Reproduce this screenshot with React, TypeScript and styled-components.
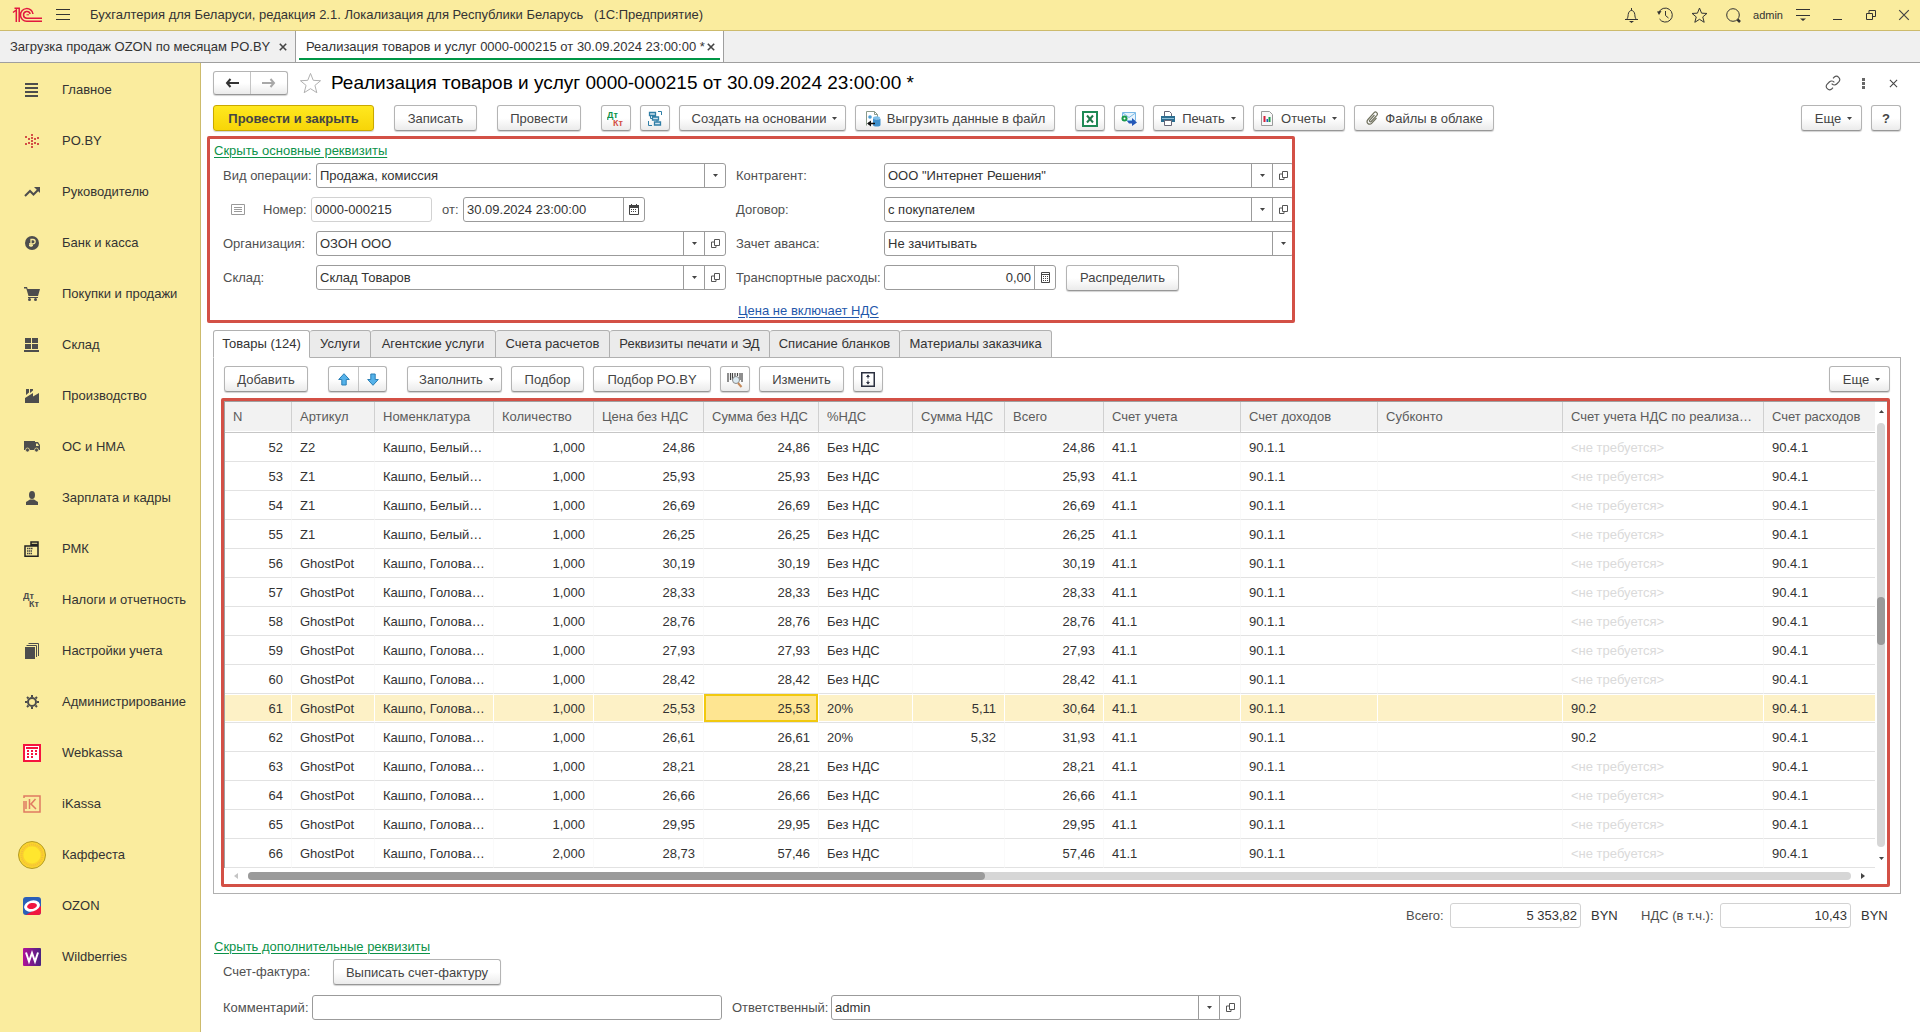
import React from 'react';
import styled, { createGlobalStyle, css } from 'styled-components';

const Global = createGlobalStyle`
  *, *::before, *::after { box-sizing: border-box; }
  body { margin: 0; background: #fff; }
  body, button, input, select, table {
    font-family: "Liberation Sans", Arial, sans-serif;
    font-size: 13px;
    line-height: 18px;
    color: #333;
  }
`;

const RED = '#d35046';

/* ---------- shell ---------- */

const Shell = styled.div`
  display: flex;
  flex-direction: column;
  min-height: 100vh;
`;

const TitleBar = styled.header`
  display: flex;
  align-items: center;
  height: 31px;
  background: #faec9e;
  border-bottom: 1px solid #cdbb6c;
`;

const AppName = styled.span`
  flex: 1;
  padding-left: 8px;
  white-space: pre;
`;

const BarButton = styled.button<{ $w?: number }>`
  display: flex;
  align-items: center;
  justify-content: center;
  width: ${(p) => p.$w ?? 34}px;
  height: 30px;
  padding: 0;
  border: 0;
  background: none;
`;

const UserName = styled.span`
  width: 36px;
  text-align: center;
  font-size: 11px;
`;

const LogoBox = styled.div`
  display: flex;
  padding-left: 12px;
`;

const WindowTabs = styled.nav`
  display: flex;
  height: 32px;
  background: #f0f0f0;
  border-bottom: 1px solid #9f9f9f;
`;

const WindowTab = styled.div<{ $w: number; $active?: boolean }>`
  display: flex;
  align-items: center;
  justify-content: space-between;
  width: ${(p) => p.$w}px;
  padding: 0 6px 0 10px;
  border-right: 1px solid #9f9f9f;
  white-space: nowrap;
  ${(p) =>
    p.$active &&
    css`
      background: linear-gradient(#009646, #009646) 50% calc(100% - 2px) / calc(100% - 6px) 2px no-repeat #fff;
    `}
`;

const TabLabel = styled.button`
  padding: 0;
  border: 0;
  background: none;
`;

const TabClose = styled.button`
  display: flex;
  padding: 2px;
  border: 0;
  background: none;
`;

const Body = styled.div`
  display: flex;
  flex: 1;
`;

const Sidebar = styled.nav`
  flex: none;
  width: 201px;
  padding-top: 1px;
  background: #faec9e;
  border-right: 1px solid #cdbb6c;
`;

const SideItem = styled.a`
  display: flex;
  align-items: center;
  gap: 14px;
  height: 51px;
  padding-left: 16px;
  color: #333;
  text-decoration: none;
  white-space: nowrap;
`;

const SideIcon = styled.span`
  display: flex;
  justify-content: center;
  width: 32px;
`;

const Main = styled.main`
  flex: 1;
  min-width: 0;
  padding: 8px 19px 12px 12px;
`;

/* ---------- controls ---------- */

const buttonFace = css`
  border: 1px solid #b4b4b4;
  border-bottom-color: #979797;
  background: linear-gradient(#fff 50%, #ebebeb);
  box-shadow: 0 1px 1px rgba(0, 0, 0, 0.18);
`;

const Button = styled.button<{ $w?: number; $primary?: boolean; $menu?: boolean }>`
  display: flex;
  flex: none;
  align-items: center;
  justify-content: center;
  gap: 6px;
  width: ${(p) => (p.$w ? `${p.$w}px` : 'auto')};
  height: 26px;
  padding: 1px 0 0 ${(p) => (p.$menu ? 4 : 0)}px;
  border-radius: 3px;
  color: #444;
  white-space: nowrap;
  ${buttonFace}
  ${(p) =>
    p.$primary &&
    css`
      border-color: #c9a800;
      background: linear-gradient(#ffe81f, #f7d508);
      font-weight: bold;
    `}
`;

const ButtonPair = styled.div`
  display: flex;
  border-radius: 3px;
  ${buttonFace}
`;

const PairButton = styled.button<{ $w: number; $h: number }>`
  display: flex;
  align-items: center;
  justify-content: center;
  width: ${(p) => p.$w}px;
  height: ${(p) => p.$h}px;
  padding: 0;
  border: 0;
  background: none;
  & + & { border-left: 1px solid #c4c4c4; }
`;

const Bar = styled.div<{ $gap?: number }>`
  display: flex;
  align-items: center;
  gap: ${(p) => p.$gap ?? 20}px;
`;

const Spacer = styled.span`
  flex: 1;
`;

const Frame = styled.span<{ $w?: number; $muted?: boolean }>`
  display: flex;
  flex: ${(p) => (p.$w ? 'none' : '1')};
  width: ${(p) => (p.$w ? `${p.$w}px` : 'auto')};
  min-width: 0;
  height: 25px;
  border: 1px solid ${(p) => (p.$muted ? '#d2d2d2' : '#9b9b9b')};
  border-radius: 3px;
  background: #fff;
`;

const textBox = css`
  flex: 1;
  width: 0;
  min-width: 0;
  height: 23px;
  padding: 0 3px;
  border: 0;
  background: none;
  outline: none;
`;

const Input = styled.input<{ $right?: boolean }>`
  ${textBox}
  text-align: ${(p) => (p.$right ? 'right' : 'left')};
`;

const Select = styled.select`
  ${textBox}
  appearance: none;
`;

const addOn = css`
  display: flex;
  flex: none;
  align-items: center;
  justify-content: center;
  width: 21px;
  padding: 0;
  border: 0;
  border-left: 1px solid #9b9b9b;
  background: none;
`;

const AddOn = styled.button`${addOn}`;
const SelectMark = styled.span`${addOn} pointer-events: none;`;

const Label = styled.label<{ $w?: number }>`
  flex: none;
  width: ${(p) => (p.$w ? `${p.$w}px` : 'auto')};
  color: #505050;
  white-space: nowrap;
`;

const Link = styled.a<{ $blue?: boolean }>`
  color: ${(p) => (p.$blue ? '#1f57ab' : '#0c9249')};
  text-decoration: underline;
  text-underline-offset: 2px;
`;

/* ---------- document header ---------- */

const DocHeader = styled.div`
  display: flex;
  align-items: center;
  height: 24px;
  margin-bottom: 10px;
`;

const DocTitle = styled.h1`
  flex: 1;
  margin: 0;
  padding-left: 9px;
  font-size: 19px;
  line-height: 24px;
  font-weight: normal;
  color: #000;
`;

const StarBox = styled.button`
  display: flex;
  margin-left: 11px;
  padding: 0;
  border: 0;
  background: none;
`;

const HeaderTools = styled.div`
  display: flex;
  margin-right: -7px;
`;

const Requisites = styled.section`
  width: 100%;
  max-width: 1088px;
  margin: 5px 0 0 -6px;
  overflow: hidden;
  border: 3px solid ${RED};
  border-radius: 2px;
`;

const RequisitesHead = styled.div`
  height: 24px;
  padding: 3px 0 0 4px;
`;

const Columns = styled.div`
  display: grid;
  grid-template-columns: 516px 1fr;
  column-gap: 10px;
  margin-right: -2px;
`;

const Column = styled.div<{ $inset?: boolean }>`
  display: flex;
  flex-direction: column;
  gap: 9px;
  padding-left: ${(p) => (p.$inset ? 13 : 0)}px;
`;

const Row = styled.div<{ $pad?: number }>`
  display: flex;
  align-items: center;
  height: 25px;
  padding-left: ${(p) => p.$pad ?? 0}px;
`;

const PriceNote = styled.div`
  height: 21px;
  padding: 3px 0 0 2px;
`;

const ListMark = styled.span`
  display: flex;
  width: 32px;
`;

const Gap = styled.span`
  width: 10px;
`;

/* ---------- table part ---------- */

const PageTabs = styled.div`
  display: flex;
  margin: 7px 0 -1px;
  position: relative;
`;

const PageTab = styled.button<{ $w: number; $active?: boolean }>`
  width: ${(p) => p.$w}px;
  height: 28px;
  padding: 0;
  border: 1px solid #b0b0b0;
  border-bottom-color: ${(p) => (p.$active ? '#fff' : '#b0b0b0')};
  border-radius: 3px 3px 0 0;
  background: ${(p) => (p.$active ? '#fff' : '#ebebeb')};
  white-space: nowrap;
  & + & { border-left: 0; }
`;

const Panel = styled.section`
  padding: 8px 10px 6px 7px;
  border: 1px solid #b0b0b0;
`;

const PanelBar = styled(Bar)`
  padding-left: 3px;
  margin-bottom: 6px;
`;

const GridBox = styled.div`
  display: flex;
  flex-direction: column;
  border: 3px solid ${RED};
  border-radius: 2px;
`;

const GridTop = styled.div`
  display: flex;
  border-top: 1px solid #a0a0a0;
  border-left: 1px solid #a0a0a0;
`;

const Table = styled.table`
  flex: 1;
  width: 0;
  table-layout: fixed;
  border-collapse: separate;
  border-spacing: 0;
`;

const Th = styled.th`
  height: 31px;
  padding: 0 0 0 8px;
  overflow: hidden;
  border-right: 1px solid #d0d0d0;
  border-bottom: 1px solid #c6c6c6;
  background: #f2f2f2;
  box-shadow: inset 0 -1px #fff;
  color: #5c5c5c;
  font-weight: normal;
  text-align: left;
  text-overflow: ellipsis;
  white-space: nowrap;
  &:last-child { border-right: 0; }
`;

const Td = styled.td<{ $right?: boolean; $faint?: boolean; $row?: boolean; $cell?: boolean }>`
  height: 29px;
  padding: 2px 8px 0;
  overflow: hidden;
  border-right: 1px solid ${(p) => (p.$row ? '#fff' : '#fafafa')};
  border-bottom: 1px solid #e2e2e2;
  background: ${(p) => (p.$cell ? '#fee591' : p.$row ? '#fdf1c6' : '#fff')};
  box-shadow: ${(p) => (p.$cell ? 'inset 0 0 0 2px #f1c90f' : p.$row ? 'inset 0 1px #fff, inset 0 -1px #fff' : 'none')};
  color: ${(p) => (p.$faint ? '#dadada' : '#333')};
  text-align: ${(p) => (p.$right ? 'right' : 'left')};
  white-space: nowrap;
  &:last-child { border-right: 0; }
`;

const VScroll = styled.div`
  display: flex;
  flex-direction: column;
  align-items: center;
  width: 12px;
  padding: 8px 0;
  gap: 10px;
`;

const VTrack = styled.div`
  flex: 1;
  width: 8px;
  padding-top: 174px;
  border-radius: 4px;
  background: #d6d6d6;
`;

const VThumb = styled.div`
  height: 48px;
  border-radius: 4px;
  background: #9a9a9a;
`;

const HScroll = styled.div`
  display: flex;
  align-items: center;
  height: 16px;
  gap: 10px;
  padding: 0 22px 0 10px;
`;

const HTrack = styled.div`
  flex: 1;
  height: 8px;
  border-radius: 4px;
  background: #d6d6d6;
`;

const HThumb = styled.div`
  width: 46%;
  height: 8px;
  border-radius: 4px;
  background: #9a9a9a;
`;

const Totals = styled.div`
  display: flex;
  align-items: center;
  justify-content: flex-end;
  margin: 9px 10px 10px 0;
`;

const Currency = styled.span`
  width: 40px;
  padding-left: 10px;
`;

const ExtraHead = styled.div`
  padding-left: 1px;
`;

const Extra = styled.div`
  padding: 3px 0 0 10px;
`;

const ExtraRow = styled.div`
  display: flex;
  align-items: center;
  & + & { margin-top: 10px; }
`;

/* ---------- icons ---------- */

type SvgProps = { w: number; h?: number; vb?: string; children: React.ReactNode };
const Svg = ({ w, h = w, vb, children }: SvgProps) => (
  <svg width={w} height={h} viewBox={vb ?? `0 0 ${w} ${h}`} fill="none" aria-hidden="true">
    {children}
  </svg>
);

const Caret = () => (
  <Svg w={5} h={3}><path d="M0 0h5L2.500 3z" fill="#444" /></Svg>
);
const OpenIcon = () => (
  <Svg w={11} h={11}>
    <path d="M4.500 1.500h5v6h-5zM4 4H1.500v5.500H6V8" stroke="#555" />
  </Svg>
);
const CalendarIcon = () => (
  <Svg w={10} h={11}>
    <path d="M.5 2h9v8.500h-9z" stroke="#444" />
    <path d="M0 1h10v3H0zM2 0h1v2H2zM7 0h1v2H7z" fill="#444" />
    <path d="M2 5.500h6M2 7.500h6" stroke="#444" strokeDasharray="1 1" />
  </Svg>
);
const CalcIcon = () => (
  <Svg w={9} h={11}>
    <path d="M.5.500h8v10h-8zM1 2.500h7" stroke="#444" />
    <path d="M2 4.500h5M2 6.500h5M2 8.500h5" stroke="#444" strokeDasharray="1 1" />
  </Svg>
);
const CloseIcon = ({ s = 10, t = 1 }: { s?: number; t?: number }) => (
  <Svg w={s} vb="0 0 10 10"><path d="M1 1l8 8M9 1L1 9" stroke="#444" strokeWidth={t} /></Svg>
);

const Logo = () => (
  <Svg w={31} h={16}>
    <g stroke="#e2173f" strokeWidth="1.500">
      <path d="M1 5.500L4.300 3v12M2.500 1.200h4.700V15" />
      <path d="M21 7a6.300 6.300 0 1 0-6.300 7.200H30" />
      <path d="M18.200 7a3.400 3.400 0 1 0-3.400 4.300H30" />
      <path d="M14.500 7.800h2.500" strokeWidth="1" />
    </g>
  </Svg>
);

const Burger = () => (
  <Svg w={14} h={12}><path d="M0 .5h14M0 5.500h14M0 10.500h14" stroke="#333" /></Svg>
);

const DtKt = ({ a, b }: { a: string; b: string }) => (
  <Svg w={18} h={16}>
    <g fontFamily="Liberation Sans, Arial, sans-serif" fontWeight="bold" fontSize="9">
      <text x="0" y="7" fill={a}>Дт</text>
      <text x="6" y="15" fill={b}>Кт</text>
    </g>
  </Svg>
);

const D = '#4d4d4d';

const sections: { name: string; icon: React.ReactNode }[] = [
  { name: 'Главное', icon: <Svg w={14} h={14}><path d="M0 1h13M0 5h13M0 9h13M0 13h13" stroke={D} strokeWidth="2" /></Svg> },
  {
    name: 'PO.BY',
    icon: (
      <Svg w={14} h={14}>
        <path
          fill={RED}
          d="M6 0h2v2H6zM6 3h2v2H6zM6 6h2v2H6zM6 9h2v2H6zM6 12h2v2H6zM3 4h2v2H3zM3 8h2v2H3zM9 4h2v2H9zM9 8h2v2H9zM0 2h2v2H0zM0 9h2v2H0zM12 3h2v2h-2zM12 9h2v2h-2z"
        />
      </Svg>
    ),
  },
  {
    name: 'Руководителю',
    icon: <Svg w={16} h={10}><path d="M1 9l5-5 3.500 3.500L14 3" stroke={D} strokeWidth="2" /><path d="M10 0h6v6z" fill={D} /></Svg>,
  },
  {
    name: 'Банк и касса',
    icon: (
      <Svg w={14}>
        <circle cx="7" cy="7" r="7" fill={D} />
        <path d="M6 11V3.500h2a2 2 0 0 1 0 4.300H4M4 9.500h4" stroke="#faec9e" strokeWidth="1.300" />
      </Svg>
    ),
  },
  {
    name: 'Покупки и продажи',
    icon: (
      <Svg w={16} h={14}>
        <path d="M0 0h3l.6 2H16l-2 7H4.500L2.300 1.500H0zM4 10h10v1H4z" fill={D} />
        <circle cx="5.500" cy="12.500" r="1.500" fill={D} /><circle cx="11.500" cy="12.500" r="1.500" fill={D} />
      </Svg>
    ),
  },
  { name: 'Склад', icon: <Svg w={16} h={14}><path d="M1 0h6v5H1zM8 0h6v5H8zM1 6h6v5H1zM8 6h6v5H8zM0 12h15v2H0z" fill={D} /></Svg> },
  {
    name: 'Производство',
    icon: <Svg w={14} h={14}><path d="M0 14V9l8-5v3.500L14 4v10zM1 0h3v3.500L1 6zM5 0h3v1.500L5 4z" fill={D} /></Svg>,
  },
  {
    name: 'ОС и НМА',
    icon: (
      <Svg w={16} h={11}>
        <path d="M0 0h11v9H0zM11 1h3l2 3v5h-5z" fill={D} />
        <path d="M12 2.500h1.500L15 5h-3z" fill="#faec9e" />
        <circle cx="3.500" cy="9" r="2" fill={D} stroke="#faec9e" strokeWidth=".7" />
        <circle cx="12.500" cy="9" r="2" fill={D} stroke="#faec9e" strokeWidth=".7" />
      </Svg>
    ),
  },
  {
    name: 'Зарплата и кадры',
    icon: <Svg w={12} h={14}><ellipse cx="6" cy="4" rx="3" ry="4" fill={D} /><path d="M0 14v-3l4-2.500h4l4 2.500v3z" fill={D} /></Svg>,
  },
  {
    name: 'РМК',
    icon: (
      <Svg w={16} h={16}>
        <path d="M1 5h13v10.200H1zM7 1h7v2.500H7zM10.500 3.500V5" stroke="#222" strokeWidth="1.500" />
        <path d="M3 7.500h6M3 10h5M3 12.500h5" stroke="#444" strokeWidth="1.500" strokeDasharray="1.500 .5" />
      </Svg>
    ),
  },
  { name: 'Налоги и отчетность', icon: <DtKt a={D} b={D} /> },
  {
    name: 'Настройки учета',
    icon: <Svg w={14} h={16}><path d="M0 4h10v12H0z" fill={D} /><path d="M1.500 2.500h10V14M3.500.5h10V13" stroke={D} /></Svg>,
  },
  {
    name: 'Администрирование',
    icon: (
      <Svg w={14}>
        <circle cx="7" cy="7" r="4" stroke={D} strokeWidth="2" />
        <path d="M7 0v2M7 12v2M0 7h2M12 7h2M2 2l1.500 1.500M10.500 10.500L12 12M12 2l-1.500 1.500M3.500 10.500L2 12" stroke={D} strokeWidth="2" />
      </Svg>
    ),
  },
  {
    name: 'Webkassa',
    icon: (
      <Svg w={18}>
        <rect x="1" y="1" width="16" height="16" fill="#fff" stroke="#f5143f" strokeWidth="2" />
        <path d="M3 4h12" stroke="#f5143f" strokeWidth="2" />
        <path d="M4 7h10M4 10h10M4 13h6" stroke="#f5143f" strokeWidth="2" strokeDasharray="2 2" />
      </Svg>
    ),
  },
  {
    name: 'iKassa',
    icon: (
      <Svg w={18}>
        <path d="M1 3V1h16v16H1V6" stroke="#e07a62" strokeWidth="1.500" />
        <path d="M6.500 4v10M12.500 4L8 9l5 5M3 6v8" stroke="#e07a62" strokeWidth="1.500" />
      </Svg>
    ),
  },
  {
    name: 'Каффеста',
    icon: (
      <Svg w={28}>
        <circle cx="14" cy="14" r="13.500" fill="#fbd42c" stroke="#b39b25" />
        <circle cx="14" cy="14" r="10.500" stroke="#f3bd3c" strokeWidth="2" strokeDasharray="1 1" />
        <circle cx="14" cy="14" r="8.500" fill="#ffe62e" />
      </Svg>
    ),
  },
  {
    name: 'OZON',
    icon: (
      <Svg w={18}>
        <rect width="18" height="18" rx="3" fill="#2a5fb8" />
        <path d="M3 18h12a3 3 0 0 0 3-3V9z" fill="#f0163f" />
        <ellipse cx="9" cy="9" rx="8" ry="5.500" fill="#fff" transform="rotate(-15 9 9)" />
        <ellipse cx="9" cy="9" rx="5" ry="3" fill="#f0163f" transform="rotate(-12 9 9)" />
      </Svg>
    ),
  },
  {
    name: 'Wildberries',
    icon: (
      <Svg w={18}>
        <defs><linearGradient id="wb"><stop stopColor="#b0119a" /><stop offset="1" stopColor="#4a2380" /></linearGradient></defs>
        <rect width="18" height="18" rx="1" fill="url(#wb)" />
        <path d="M3 4.500l3 9 3-8.500 3 8.500 3-9" stroke="#fff" strokeWidth="2" />
      </Svg>
    ),
  },
];

const BellIcon = () => (
  <Svg w={15} h={15}>
    <path d="M1 11.500h13M2.500 11.500C4 10 4 8.500 4.200 6.500 4.500 4 5.800 2.500 7.500 2.500S10.500 4 10.800 6.500c.2 2 .2 3.500 1.700 5M7.500 0v2.500" stroke="#333" />
    <path d="M5 13h5l-2.500 2z" fill="#333" />
  </Svg>
);
const HistoryIcon = () => (
  <Svg w={16} h={16}>
    <path d="M1.800 5.500A7 7 0 1 1 2.500 12M8.500 4v4.500l3 2.500" stroke="#333" />
    <path d="M0 4.500l4.500-.5L2 8z" fill="#333" />
  </Svg>
);
const StarIcon = ({ s, c }: { s: number; c: string }) => (
  <Svg w={s} vb="0 0 24 24">
    <path d="M12 1.500l2.900 7.200 7.600.4-5.900 4.900 2 7.600-6.600-4.200-6.600 4.200 2-7.600L1.500 9.100l7.600-.4z" stroke={c} strokeWidth={24 / s} />
  </Svg>
);
const SearchIcon = () => (
  <Svg w={15} h={15}>
    <circle cx="7" cy="7" r="6.300" stroke="#333" /><path d="M11.500 11.500l2.500 2.500" stroke="#333" strokeWidth="2.500" />
  </Svg>
);

const StructureIcon = () => (
  <Svg w={14} h={15}>
    <path d="M1.500 1.500h6v3h-6zM4.500 6h6v3h-6zM6.500 11h6v3h-6z" fill="#cfe3ef" stroke="#2f7ea6" strokeWidth="1.300" />
    <path d="M2.500 4.500v3h2M9 9v2M10 .5h3.500V4M.5 10v4.500H4" stroke="#2f7ea6" />
  </Svg>
);
const ExportIcon = () => (
  <Svg w={16} h={16}>
    <path d="M1.500 14.500V.5h8l3 3v5" fill="#fff" stroke="#8a9a8a" />
    <path d="M9.500.5v3h3" stroke="#8a9a8a" />
    <circle cx="5" cy="6" r="1.800" fill="#4b9fd4" />
    <ellipse cx="11.500" cy="7" rx="3.500" ry="1.700" fill="#7cc0ea" />
    <path d="M8 7.500v6.500c0 2 7.500 2 7.500 0V7.500c-1 1.500-6 1.500-7.500 0z" fill="#3f90cc" />
    <path d="M3 12.500h7" stroke="#111" strokeWidth="1.500" /><path d="M6 9.500v6l-4-3z" fill="#111" />
  </Svg>
);
const ExcelIcon = () => (
  <Svg w={16} h={16}>
    <rect x="1" y="1" width="14" height="14" fill="#fff" stroke="#1d8a55" strokeWidth="2" />
    <path d="M5 4.500l6 7M11 4.500l-6 7" stroke="#1d7a4a" strokeWidth="2" />
  </Svg>
);
const MailIcon = () => (
  <Svg w={16} h={15}>
    <path d="M1.500 1.500h13v8h-13z" fill="#e7f3fc" stroke="#7ab9e6" /><path d="M2 2l6 4.500L14.500 2" stroke="#7ab9e6" />
    <circle cx="3.500" cy="7.500" r="3" fill="#1c9a4b" /><circle cx="3.500" cy="7.500" r="1" fill="#fff" />
    <path d="M6 10h5V7l5 4.500-5 3.500v-2.500H8z" fill="#2458b8" />
  </Svg>
);
const PrinterIcon = () => (
  <Svg w={15} h={15}>
    <path d="M3.500 5V.5h5l2 2V5" fill="#fff" stroke="#667" />
    <path d="M0 5h14v6H0z" fill="#2c6e91" /><path d="M1 7.500h12" stroke="#8fc0d8" />
    <path d="M3.500 9.500h7v5h-7z" fill="#fff" stroke="#667" />
  </Svg>
);
const ReportIcon = () => (
  <Svg w={14} h={15}>
    <path d="M.5.500h8l3 3v11H.5z" fill="#f8f8f8" stroke="#9a9a9a" />
    <path d="M2.500 5h2v6h-2z" fill="#d6203a" /><path d="M5.500 8h1.500v3H5.500z" fill="#2458b8" /><path d="M7.500 6h2v5h-2z" fill="#1c9a4b" />
  </Svg>
);
const ClipIcon = () => (
  <Svg w={14} h={15}>
    <path d="M9.500 4L4.800 9.200c-.8 1 .5 2.200 1.400 1.300l5.600-6.200c1.700-2-1-4.400-2.700-2.600L3 8.500c-2.500 3 1 6.500 3.800 3.600L11.500 7" stroke="#71725f" strokeWidth="1.200" />
  </Svg>
);
const BarcodeIcon = () => (
  <Svg w={16} h={16}>
    <path d="M1 1v9M3.500 1v7M5.500 1v7M8 1v4M10.500 1v3M13 1v7M15 1v9" stroke="#444" strokeWidth="1.200" />
    <circle cx="9" cy="8" r="3.500" fill="#dbeaf2" stroke="#8a8a8a" /><path d="M11 11l3.500 4" stroke="#c58a5a" strokeWidth="2" />
  </Svg>
);
const ArrowIcon = ({ down }: { down?: boolean }) => (
  <Svg w={12} h={13}>
    <path d="M6 .7L11.300 6.500H8.200V12H3.800V6.500H.7z" fill="#55b2ea" stroke="#2b7fb5" transform={down ? 'rotate(180 6 6.500)' : undefined} />
  </Svg>
);
const ExpandIcon = () => (
  <Svg w={14} h={15}>
    <rect x=".75" y=".75" width="12.500" height="13.500" stroke="#2b3040" strokeWidth="1.500" />
    <path d="M7 3v3.500M7 8.500V12" stroke="#2b3040" /><path d="M5 5l2-2.500L9 5zM5 10l2 2.500L9 10z" fill="#2b3040" />
  </Svg>
);
const HistoryArrow = ({ c, back }: { c: string; back?: boolean }) => (
  <Svg w={14} h={10}>
    <g transform={back ? undefined : 'rotate(180 7 5)'}>
      <path d="M2 5h12" stroke={c} strokeWidth="2" /><path d="M5.500 1L2 5l3.500 4" stroke={c} strokeWidth="2" />
    </g>
  </Svg>
);
const LinkIcon = () => (
  <Svg w={16} h={16} vb="0 0 24 24">
    <path
      d="M10 13a5 5 0 0 0 7.500.5l3.500-3.500a5 5 0 0 0-7-7l-2 2M14 11a5 5 0 0 0-7.500-.5L3 14a5 5 0 0 0 7 7l2-2"
      stroke="#555" strokeWidth="1.700"
    />
  </Svg>
);

/* ---------- data ---------- */

const columns: { title: string; w?: number; right?: boolean }[] = [
  { title: 'N', w: 67, right: true },
  { title: 'Артикул', w: 83 },
  { title: 'Номенклатура', w: 119 },
  { title: 'Количество', w: 100, right: true },
  { title: 'Цена без НДС', w: 110, right: true },
  { title: 'Сумма без НДС', w: 115, right: true },
  { title: '%НДС', w: 94 },
  { title: 'Сумма НДС', w: 92, right: true },
  { title: 'Всего', w: 99, right: true },
  { title: 'Счет учета', w: 137 },
  { title: 'Счет доходов', w: 137 },
  { title: 'Субконто' },
  { title: 'Счет учета НДС по реализа…', w: 201 },
  { title: 'Счет расходов', w: 111 },
];

const NONE = '<не требуется>';
const goods: [string, string, string, string, string, string?, string?][] = [
  ['52', 'Z2', '1,000', '24,86', '24,86'],
  ['53', 'Z1', '1,000', '25,93', '25,93'],
  ['54', 'Z1', '1,000', '26,69', '26,69'],
  ['55', 'Z1', '1,000', '26,25', '26,25'],
  ['56', 'GhostPot', '1,000', '30,19', '30,19'],
  ['57', 'GhostPot', '1,000', '28,33', '28,33'],
  ['58', 'GhostPot', '1,000', '28,76', '28,76'],
  ['59', 'GhostPot', '1,000', '27,93', '27,93'],
  ['60', 'GhostPot', '1,000', '28,42', '28,42'],
  ['61', 'GhostPot', '1,000', '25,53', '25,53', '5,11', '30,64'],
  ['62', 'GhostPot', '1,000', '26,61', '26,61', '5,32', '31,93'],
  ['63', 'GhostPot', '1,000', '28,21', '28,21'],
  ['64', 'GhostPot', '1,000', '26,66', '26,66'],
  ['65', 'GhostPot', '1,000', '29,95', '29,95'],
  ['66', 'GhostPot', '2,000', '28,73', '57,46'],
];

const pages: [string, number][] = [
  ['Товары (124)', 97],
  ['Услуги', 61],
  ['Агентские услуги', 125],
  ['Счета расчетов', 114],
  ['Реквизиты печати и ЭД', 160],
  ['Списание бланков', 130],
  ['Материалы заказчика', 152],
];

/* ---------- fields ---------- */

type ComboProps = { id: string; label: string; labelW: number; value: string; w?: number };

const Combo = ({ id, label, labelW, value, w }: ComboProps) => (
  <>
    <Label htmlFor={id} $w={labelW}>{label}</Label>
    <Frame $w={w}>
      <Input id={id} defaultValue={value} />
      <AddOn aria-label="Выбрать"><Caret /></AddOn>
      <AddOn aria-label="Открыть"><OpenIcon /></AddOn>
    </Frame>
  </>
);

const Choice = ({ id, label, labelW, value }: ComboProps) => (
  <>
    <Label htmlFor={id} $w={labelW}>{label}</Label>
    <Frame>
      <Select id={id} defaultValue={value}><option>{value}</option></Select>
      <SelectMark><Caret /></SelectMark>
    </Frame>
  </>
);

export default function App() {
  return (
    <Shell>
      <Global />
      <TitleBar>
        <LogoBox><Logo /></LogoBox>
        <BarButton $w={39} aria-label="Меню"><Burger /></BarButton>
        <AppName>{'Бухгалтерия для Беларуси, редакция 2.1. Локализация для Республики Беларусь   (1С:Предприятие)'}</AppName>
        <BarButton aria-label="Уведомления"><BellIcon /></BarButton>
        <BarButton aria-label="История"><HistoryIcon /></BarButton>
        <BarButton aria-label="Избранное"><StarIcon s={17} c="#333" /></BarButton>
        <BarButton aria-label="Поиск"><SearchIcon /></BarButton>
        <UserName>admin</UserName>
        <BarButton aria-label="Настройки">
          <Svg w={14} h={12}><path d="M0 .5h14M0 6.500h14" stroke="#333" /><path d="M4 9.500h6l-3 2.500z" fill="#333" /></Svg>
        </BarButton>
        <BarButton aria-label="Свернуть"><Svg w={9} h={10}><path d="M0 9.500h9" stroke="#333" /></Svg></BarButton>
        <BarButton aria-label="Восстановить"><Svg w={10} h={10}><path d="M.5 3.500h6v6h-6zM3 3V.5h6.500v6H7" stroke="#333" /></Svg></BarButton>
        <BarButton $w={32} aria-label="Закрыть"><CloseIcon s={12} /></BarButton>
      </TitleBar>

      <WindowTabs>
        <WindowTab $w={296}>
          <TabLabel>Загрузка продаж OZON по месяцам PO.BY</TabLabel>
          <TabClose aria-label="Закрыть вкладку"><CloseIcon s={8} t={2} /></TabClose>
        </WindowTab>
        <WindowTab $w={428} $active>
          <TabLabel>Реализация товаров и услуг 0000-000215 от 30.09.2024 23:00:00 *</TabLabel>
          <TabClose aria-label="Закрыть вкладку"><CloseIcon s={8} t={2} /></TabClose>
        </WindowTab>
      </WindowTabs>

      <Body>
        <Sidebar>
          {sections.map((s) => (
            <SideItem key={s.name} href="#"><SideIcon>{s.icon}</SideIcon>{s.name}</SideItem>
          ))}
        </Sidebar>

        <Main>
          <DocHeader>
            <ButtonPair>
              <PairButton $w={36} $h={22} aria-label="Назад"><HistoryArrow back c="#333" /></PairButton>
              <PairButton $w={37} $h={22} aria-label="Вперед"><HistoryArrow c="#a8a8a8" /></PairButton>
            </ButtonPair>
            <StarBox aria-label="В избранное"><StarIcon s={23} c="#b0b0b0" /></StarBox>
            <DocTitle>Реализация товаров и услуг 0000-000215 от 30.09.2024 23:00:00 *</DocTitle>
            <HeaderTools>
              <BarButton $w={30} aria-label="Ссылка"><LinkIcon /></BarButton>
              <BarButton $w={30} aria-label="Действия">
                <Svg w={3} h={11}><path d="M0 0h3v3H0zM0 4h3v3H0zM0 8h3v3H0z" fill="#666" /></Svg>
              </BarButton>
              <BarButton $w={30} aria-label="Закрыть документ"><CloseIcon s={9} t={1.2} /></BarButton>
            </HeaderTools>
          </DocHeader>

          <Bar>
            <Button $w={161} $primary>Провести и закрыть</Button>
            <Button $w={83}>Записать</Button>
            <Button $w={84}>Провести</Button>
            <Bar $gap={9}>
              <Button $w={30} aria-label="Проводки"><DtKt a="#0c9249" b={RED} /></Button>
              <Button $w={30} aria-label="Структура подчиненности"><StructureIcon /></Button>
              <Button $w={167} $menu>Создать на основании <Caret /></Button>
              <Button $w={200}><ExportIcon />Выгрузить данные в файл</Button>
            </Bar>
            <Bar $gap={9}>
              <Button $w={30} aria-label="Excel"><ExcelIcon /></Button>
              <Button $w={30} aria-label="Отправить"><MailIcon /></Button>
              <Button $w={91}><PrinterIcon />Печать<Caret /></Button>
              <Button $w={92}><ReportIcon />Отчеты<Caret /></Button>
              <Button $w={140}><ClipIcon />Файлы в облаке</Button>
            </Bar>
            <Spacer />
            <Bar $gap={9}>
              <Button $w={61} $menu>Еще<Caret /></Button>
              <Button $w={30}><b>?</b></Button>
            </Bar>
          </Bar>

          <Requisites>
            <RequisitesHead><Link href="#">Скрыть основные реквизиты</Link></RequisitesHead>
            <Columns>
              <Column $inset>
                <Row><Choice id="op" label="Вид операции:" labelW={93} value="Продажа, комиссия" /></Row>
                <Row $pad={8}>
                  <ListMark>
                    <Svg w={14} h={11}><path d="M.5.500h13v10H.5zM3 3.500h8M3 5.500h8M3 7.500h8" stroke="#9a9a9a" /></Svg>
                  </ListMark>
                  <Label htmlFor="num" $w={48}>Номер:</Label>
                  <Frame $w={121} $muted><Input id="num" defaultValue="0000-000215" /></Frame>
                  <Gap />
                  <Label htmlFor="date" $w={21}>от:</Label>
                  <Frame $w={182}>
                    <Input id="date" defaultValue="30.09.2024 23:00:00" />
                    <AddOn aria-label="Календарь"><CalendarIcon /></AddOn>
                  </Frame>
                </Row>
                <Row><Combo id="org" label="Организация:" labelW={93} value="ОЗОН ООО" /></Row>
                <Row><Combo id="store" label="Склад:" labelW={93} value="Склад Товаров" /></Row>
              </Column>
              <Column>
                <Row><Combo id="partner" label="Контрагент:" labelW={148} value={'ООО "Интернет Решения"'} /></Row>
                <Row><Combo id="contract" label="Договор:" labelW={148} value="с покупателем" /></Row>
                <Row><Choice id="advance" label="Зачет аванса:" labelW={148} value="Не зачитывать" /></Row>
                <Row>
                  <Label htmlFor="transport" $w={148}>Транспортные расходы:</Label>
                  <Frame $w={172}>
                    <Input id="transport" $right defaultValue="0,00" />
                    <AddOn aria-label="Калькулятор"><CalcIcon /></AddOn>
                  </Frame>
                  <Gap />
                  <Button $w={113}>Распределить</Button>
                </Row>
                <PriceNote><Link $blue href="#">Цена не включает НДС</Link></PriceNote>
              </Column>
            </Columns>
          </Requisites>

          <PageTabs role="tablist">
            {pages.map(([name, w], i) => (
              <PageTab key={name} role="tab" aria-selected={i === 0} $w={w} $active={i === 0}>{name}</PageTab>
            ))}
          </PageTabs>

          <Panel>
            <PanelBar>
              <Button $w={84}>Добавить</Button>
              <ButtonPair>
                <PairButton $w={29} $h={24} aria-label="Вверх"><ArrowIcon /></PairButton>
                <PairButton $w={28} $h={24} aria-label="Вниз"><ArrowIcon down /></PairButton>
              </ButtonPair>
              <Bar $gap={9}>
                <Button $w={95} $menu>Заполнить<Caret /></Button>
                <Button $w={73}>Подбор</Button>
                <Button $w={118}>Подбор PO.BY</Button>
                <Button $w={30} aria-label="Поиск по штрихкоду"><BarcodeIcon /></Button>
                <Button $w={85}>Изменить</Button>
                <Button $w={30} aria-label="Развернуть"><ExpandIcon /></Button>
              </Bar>
              <Spacer />
              <Button $w={61} $menu>Еще<Caret /></Button>
            </PanelBar>

            <GridBox>
              <GridTop>
                <Table>
                  <colgroup>{columns.map((c) => <col key={c.title} width={c.w} />)}</colgroup>
                  <thead><tr>{columns.map((c) => <Th key={c.title}>{c.title}</Th>)}</tr></thead>
                  <tbody>
                    {goods.map(([n, art, qty, price, sum, vat, total]) => {
                      const cells = [
                        n, art, art[0] === 'Z' ? 'Кашпо, Белый…' : 'Кашпо, Голова…', qty, price, sum,
                        vat ? '20%' : 'Без НДС', vat ?? '', total ?? sum, '41.1', '90.1.1', '', vat ? '90.2' : NONE, '90.4.1',
                      ];
                      const current = n === '61';
                      return (
                        <tr key={n}>
                          {cells.map((text, i) => (
                            <Td
                              key={columns[i].title}
                              $right={columns[i].right}
                              $faint={text === NONE}
                              $row={current}
                              $cell={current && i === 5}
                            >
                              {text}
                            </Td>
                          ))}
                        </tr>
                      );
                    })}
                  </tbody>
                </Table>
                <VScroll>
                  <Svg w={5} h={3}><path d="M0 3h5L2.500 0z" fill="#444" /></Svg>
                  <VTrack><VThumb /></VTrack>
                  <Caret />
                </VScroll>
              </GridTop>
              <HScroll>
                <Svg w={4} h={6}><path d="M4 0v6L0 3z" fill="#c4c4c4" /></Svg>
                <HTrack><HThumb /></HTrack>
                <Svg w={4} h={6}><path d="M0 0v6l4-3z" fill="#444" /></Svg>
              </HScroll>
            </GridBox>
          </Panel>

          <Totals>
            <Label htmlFor="total" $w={44}>Всего:</Label>
            <Frame $w={131} $muted><Input id="total" $right readOnly value="5 353,82" /></Frame>
            <Currency>BYN</Currency>
            <Gap /><Gap />
            <Label htmlFor="vat" $w={79}>НДС (в т.ч.):</Label>
            <Frame $w={131} $muted><Input id="vat" $right readOnly value="10,43" /></Frame>
            <Currency>BYN</Currency>
          </Totals>

          <ExtraHead><Link href="#">Скрыть дополнительные реквизиты</Link></ExtraHead>
          <Extra>
            <ExtraRow>
              <Label as="span" $w={110}>Счет-фактура:</Label>
              <Button $w={168}>Выписать счет-фактуру</Button>
            </ExtraRow>
            <ExtraRow>
              <Label htmlFor="comment" $w={89}>Комментарий:</Label>
              <Frame $w={410}><Input id="comment" /></Frame>
              <Gap />
              <Combo id="resp" label="Ответственный:" labelW={99} value="admin" w={410} />
            </ExtraRow>
          </Extra>
        </Main>
      </Body>
    </Shell>
  );
}
